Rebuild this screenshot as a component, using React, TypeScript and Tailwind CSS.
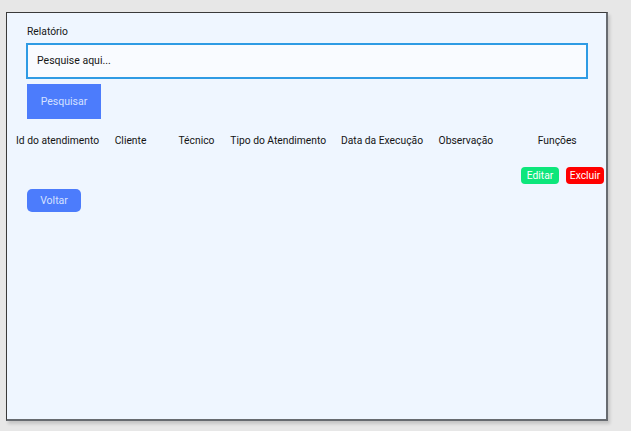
import React from "react";

export default function App() {
  const headers: { label: string; cls: string }[] = [
    { label: "Id do atendimento", cls: "w-[99px]" },
    { label: "Cliente", cls: "w-[64px]" },
    { label: "Técnico", cls: "w-[52px]" },
    { label: "Tipo do Atendimento", cls: "w-[111px]" },
    { label: "Data da Execução", cls: "w-[98px]" },
    { label: "Observação", cls: "w-[70px]" },
  ];
  return (
    <div
      className="w-[631px] h-[431px] bg-[#e7e7e7] pt-[12px] pl-[6px] overflow-hidden"
      style={{ fontFamily: "Roboto, 'Liberation Sans', sans-serif" }}
    >
      <div className="w-[602px] h-[409px] bg-[#eff6ff] border-t border-l border-[#3a3a3a] border-r-2 border-b-2 border-r-[#676b70] border-b-[#676b70] shadow-[2px_3px_3px_rgba(0,0,0,0.15)] pt-[12px] pl-[20px] flex flex-col">
        <div className="text-[10.3px] leading-[14px] text-[#161616]">Relatório</div>
        <div className="-ml-[1px] mt-[4px] w-[562px] h-[36px] border-2 border-[#2f9be4] bg-[#f9fbff] flex items-center pl-[9px] text-[10.5px] text-[#161616]">
          Pesquise aqui...
        </div>
        <button className="mt-[5px] w-[74px] h-[35px] bg-[#4c7cfc] text-[#d6e1ff] text-[10.5px] flex items-center justify-center">
          Pesquisar
        </button>
        <div className="-ml-[11px] mt-[12px] h-[20px] flex items-center text-[10.3px] text-[#141414] whitespace-nowrap">
          {headers.map((h) => (
            <div key={h.label} className={h.cls}>
              {h.label}
            </div>
          ))}
          <div className="w-[98px] text-center">Funções</div>
        </div>
        <div className="mt-[16px] h-[17px] flex gap-[7px] pl-[494px]">
          <button className="shrink-0 w-[38px] h-[17px] rounded-[4px] bg-[#0de67b] text-white text-[10.3px] flex items-center justify-center">
            Editar
          </button>
          <button className="shrink-0 w-[38px] h-[17px] rounded-[4px] bg-[#ff0000] text-white text-[10.3px] flex items-center justify-center">
            Excluir
          </button>
        </div>
        <button className="mt-[5px] w-[54px] h-[23px] rounded-[5px] bg-[#4c7cfc] text-[#d6e1ff] text-[10.5px] flex items-center justify-center">
          Voltar
        </button>
      </div>
    </div>
  );
}
